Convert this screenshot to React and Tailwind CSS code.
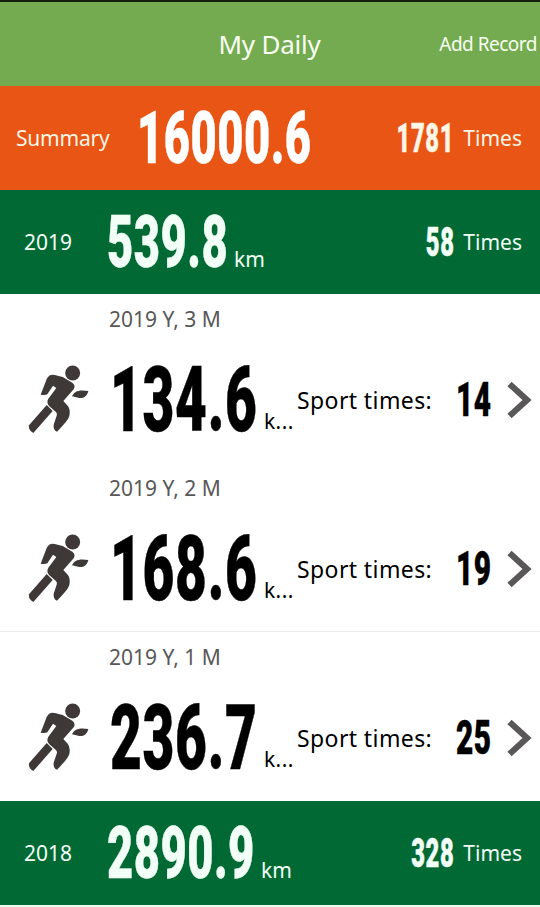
const years = [
  { year: '2019', km: '539.8', times: 58, kmWidth: 'w-[122px]' },
  { year: '2018', km: '2890.9', times: 328, kmWidth: 'w-[149px]' },
]

const months = [
  { label: '2019 Y, 3 M', km: '134.6', times: 14, border: false },
  { label: '2019 Y, 2 M', km: '168.6', times: 19, border: true },
  { label: '2019 Y, 1 M', km: '236.7', times: 25, border: false },
]

function Runner() {
  return (
    <svg viewBox="0 0 240 270" className="w-20 h-[90px] fill-[#3e3837]">
      <circle cx="158" cy="54" r="22.5" />
      <path d="M156 124C163 109 176 103 205 108C201 125 190 130 178 129Z" />
      <path d="M62 119L80 72Q88 56 104 60L128 66L157 83Q168 91 161 103L130 138L143 152Q152 162 148 183Q145 196 111 230Q99 226 101 209L110 182Q113 175 107 170L88 154Q78 143 85 131L109 99L99 92L82 118Q74 122 62 119Z" />
      <path d="M80 150L98 168L40 234Q25 226 27 211Z" />
    </svg>
  )
}

function Chevron() {
  return (
    <svg viewBox="0 0 26 40" className="w-[26px] h-10 fill-none stroke-[#595757] stroke-[6.2]">
      <path d="M2.5 4L20 20L2.5 36" />
    </svg>
  )
}

// condensed digits, squeezed inside a box of fixed width
function BigNumber({ value, className }) {
  return (
    <div className={`-mt-[3px] shrink-0 whitespace-nowrap text-[73px] leading-[104px] ${className}`}>
      <span className="inline-block origin-left scale-x-[0.62] font-['Roboto'] font-black tracking-[0.8px] [-webkit-text-stroke:0.5px_currentColor]">{value}</span>
    </div>
  )
}

function Times({ value }) {
  return (
    <div className="ml-auto mr-[18px] flex items-center">
      <div className="-mt-px flex w-16 justify-end text-[41px] leading-[104px]">
        <span className="inline-block origin-right scale-x-[0.58] font-['Roboto'] font-black tracking-[1px] [-webkit-text-stroke:0.5px_currentColor]">{value}</span>
      </div>
      <span className="ml-[9px] mt-[2px] text-[21px]">Times</span>
    </div>
  )
}

function YearRow({ year, km, times, kmWidth }) {
  return (
    <div className="flex h-[104px] items-center bg-[#016934] text-[#f2fff6]">
      <div className="mt-[2px] w-[107px] shrink-0 pl-6 text-[21px]">{year}</div>
      <BigNumber value={km} className={kmWidth} />
      <span className="ml-[5px] mt-[35px] text-[21px]">km</span>
      <Times value={times} />
    </div>
  )
}

function MonthRow({ label, km, times, border }) {
  return (
    <div className={`h-[169px] border-b bg-white ${border ? 'border-[#ececec]' : 'border-white'}`}>
      <div className="h-[50px] pl-[109px] text-[21px] leading-[50px] text-[#595757]">{label}</div>
      <div className="flex h-[112px] items-center pl-5 text-black">
        <Runner />
        <div className="-mt-[3px] ml-[10px] w-[150px] shrink-0 whitespace-nowrap text-[90px] leading-[112px]">
          <span className="inline-block origin-left scale-x-[0.61] font-['Roboto'] font-black tracking-[1.2px] [-webkit-text-stroke:0.5px_currentColor]">{km}</span>
        </div>
        <span className="ml-1 mt-[43px] w-[33px] shrink-0 text-[21px] tracking-[0.4px]">k...</span>
        <span className="mt-px w-[140px] shrink-0 whitespace-nowrap text-[23px] tracking-[0.4px]">Sport times:</span>
        <div className="flex w-[55px] shrink-0 justify-end text-[48px] leading-[112px]">
          <span className="inline-block origin-right scale-x-[0.62] font-['Roboto'] font-black tracking-[1px] [-webkit-text-stroke:0.5px_currentColor]">{times}</span>
        </div>
        <div className="ml-[15px] shrink-0">
          <Chevron />
        </div>
      </div>
    </div>
  )
}

export default function App() {
  return (
    <div className="h-[907px] w-[540px] overflow-hidden bg-[#e2fff0] font-['Noto_Sans',sans-serif]">
      <header className="grid h-[86px] grid-cols-[1fr_auto_1fr] items-center border-t-2 border-[#14200c] bg-[#75ab50] text-[#f8fff2]">
        <span />
        <h1 className="mr-px text-[26px] tracking-[-0.2px]">My Daily</h1>
        <span className="mr-[3px] mt-px text-right text-[19px] tracking-[-0.5px]">Add Record</span>
      </header>
      <div className="flex h-[104px] items-center bg-[#e95514] text-[#fff6e6]">
        <div className="mt-[2px] w-[137px] shrink-0 pl-4 text-[21px] tracking-[-0.2px]">Summary</div>
        <BigNumber value="16000.6" className="w-[176px] text-white" />
        <Times value={1781} />
      </div>
      <YearRow {...years[0]} />
      {months.map(m => <MonthRow key={m.label} {...m} />)}
      <YearRow {...years[1]} />
    </div>
  )
}
